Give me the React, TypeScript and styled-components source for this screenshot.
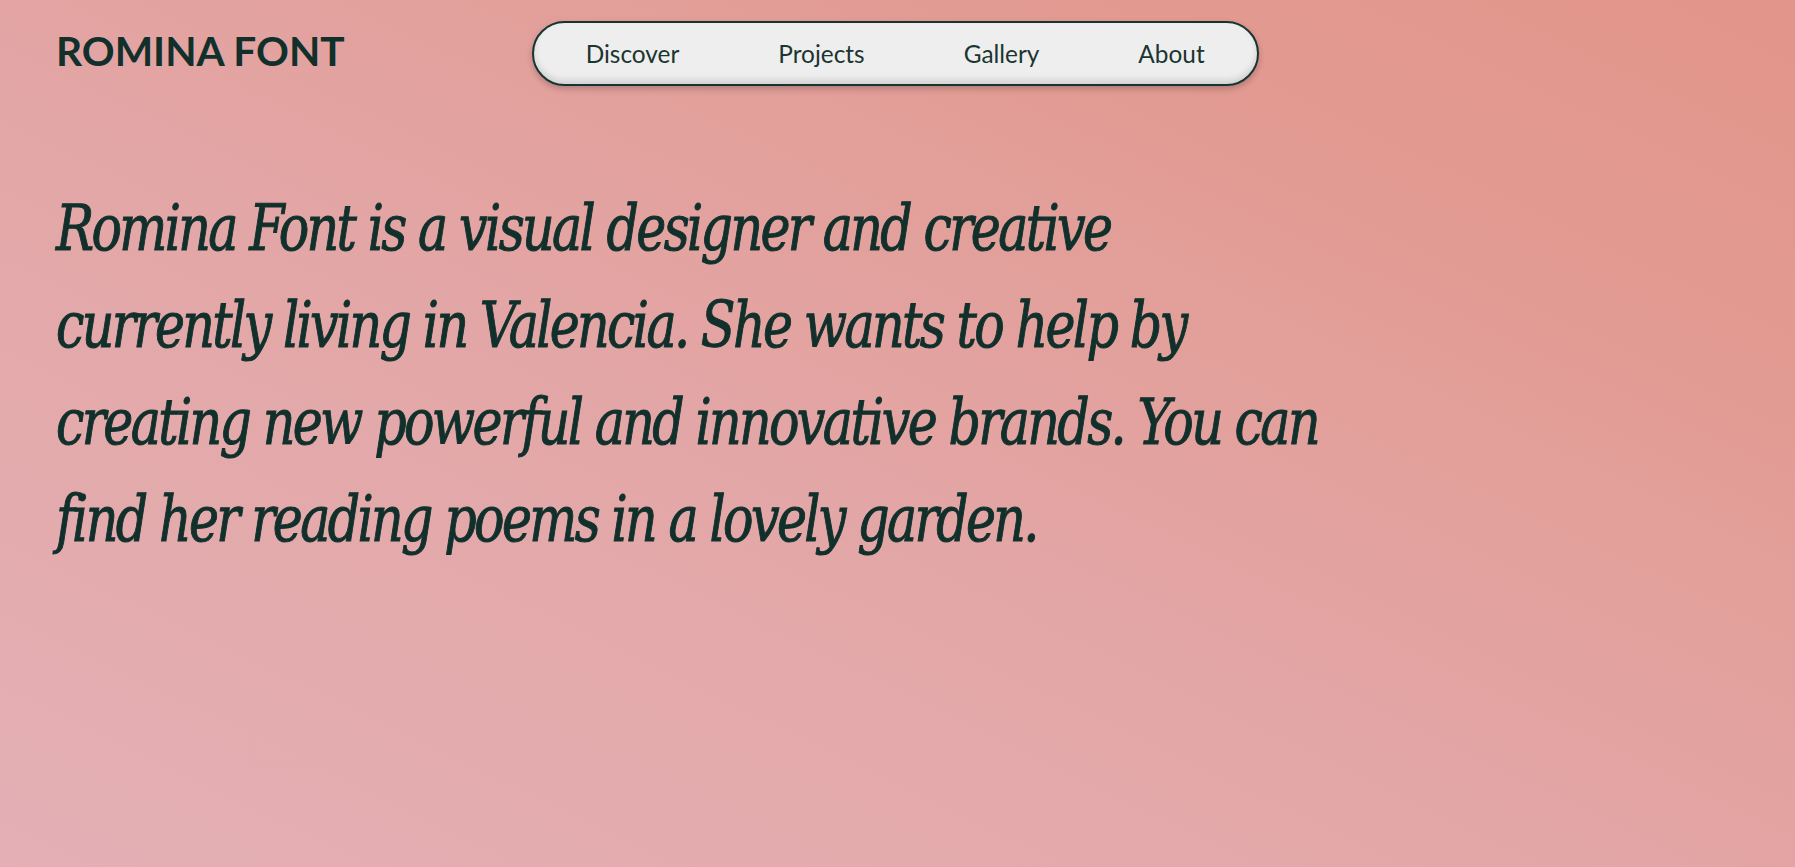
import React from "react";
import styled, { createGlobalStyle } from "styled-components";

const GlobalStyle = createGlobalStyle`
  html, body {
    margin: 0;
    padding: 0;
  }
  body {
    font-family: Lato, "Noto Sans", sans-serif;
    color: #12302b;
  }
  * { box-sizing: border-box; }
`;

const Page = styled.div`
  min-height: 100vh;
  padding: 21px 56px 0 56px;
  background: linear-gradient(
    to top right,
    #e4b0b5 0%,
    #e3a6a6 45%,
    #e29a91 80%,
    #e2958a 100%
  );
  overflow: hidden;
`;

const Header = styled.header`
  display: flex;
  align-items: center;
  gap: 187px;
  height: 64px;
`;

const Logo = styled.div`
  font-family: Lato, "Noto Sans", sans-serif;
  font-weight: 700;
  font-size: 40.7px;
  line-height: 1;
  color: #12302b;
  margin-top: -4px;
  white-space: nowrap;
`;

const NavPill = styled.nav`
  display: flex;
  align-items: center;
  gap: 99px;
  height: 65px;
  padding: 0 52px;
  background: #eeeeee;
  border: 2px solid #163430;
  border-radius: 33px;
  box-shadow: inset 0 -4px 6px rgba(0, 0, 0, 0.12),
    0 3px 6px rgba(0, 0, 0, 0.22);
`;

const NavLink = styled.a`
  font-family: Lato, "Noto Sans", sans-serif;
  font-size: 24.4px;
  font-weight: 400;
  color: #1b3531;
  text-decoration: none;
  white-space: nowrap;
  cursor: pointer;
`;

const SCALE = 0.88;

const Hero = styled.p`
  margin: 95px 0 0 0;
  width: ${1320 / SCALE}px;
  white-space: nowrap;
  font-family: "DejaVu Serif Condensed", "DejaVu Serif", serif;
  font-style: italic;
  font-size: 64px;
  line-height: 97px;
  letter-spacing: -3px;
  color: #12302b;
  -webkit-text-stroke: 1px #12302b;
  transform: scaleX(${SCALE});
  transform-origin: left top;
`;

const lines = [
  "Romina Font is a visual designer and creative",
  "currently living in Valencia. She wants to help by",
  "creating new powerful and innovative brands. You can",
  "find her reading poems in a lovely garden.",
];

export default function App() {
  return (
    <>
      <GlobalStyle />
      <Page>
        <Header>
          <Logo>ROMINA FONT</Logo>
          <NavPill>
            <NavLink>Discover</NavLink>
            <NavLink>Projects</NavLink>
            <NavLink>Gallery</NavLink>
            <NavLink>About</NavLink>
          </NavPill>
        </Header>
        <Hero>
          {lines.map((line, i) => (
            <React.Fragment key={i}>
              {line}
              {i < lines.length - 1 && <br />}
            </React.Fragment>
          ))}
        </Hero>
      </Page>
    </>
  );
}
